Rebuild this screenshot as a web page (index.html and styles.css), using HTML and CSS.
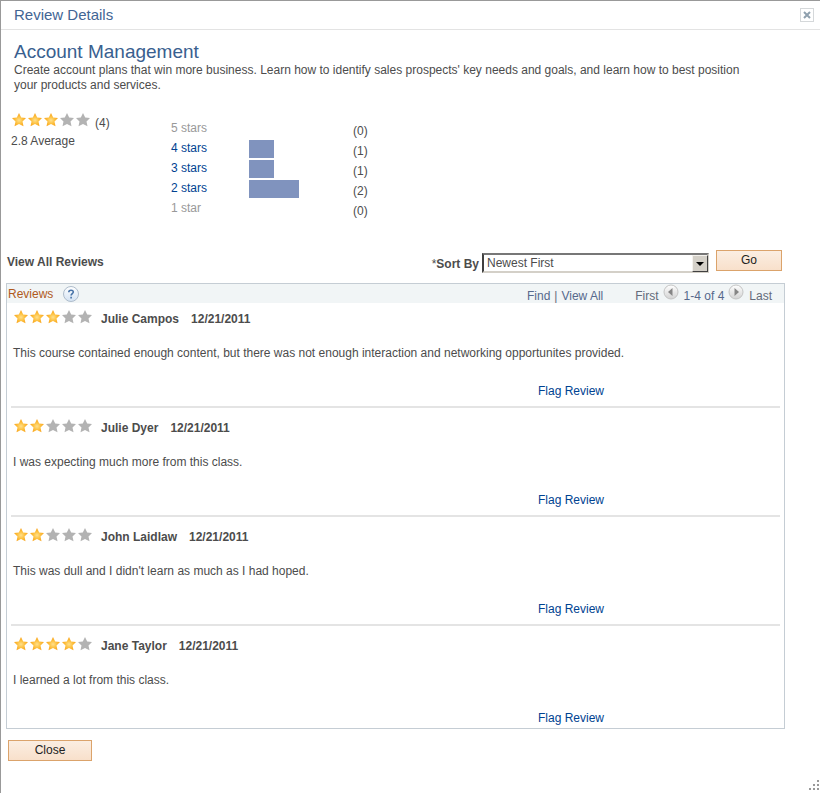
FILE: index.html
```html
<!DOCTYPE html>
<html lang="en">
<head>
<meta charset="utf-8">
<title>Review Details</title>
<link rel="stylesheet" href="styles.css">
</head>
<body>
<svg class="defs" aria-hidden="true">
  <defs>
    <radialGradient id="gold" cx="50%" cy="55%" r="50%">
      <stop offset="0" stop-color="#ffe08c"/>
      <stop offset="0.5" stop-color="#fdc244"/>
      <stop offset="1" stop-color="#f9a51c"/>
    </radialGradient>
    <linearGradient id="ball" x1="0" y1="0" x2="0" y2="1">
      <stop offset="0" stop-color="#ffffff"/>
      <stop offset="1" stop-color="#d2d2d2"/>
    </linearGradient>
    <linearGradient id="help" x1="0" y1="0" x2="0" y2="1">
      <stop offset="0" stop-color="#ffffff"/>
      <stop offset="1" stop-color="#d3e2f3"/>
    </linearGradient>
    <path id="star" d="M8 1 L10.2 5.4 L15 6 L11.5 9.4 L12.5 14.2 L8 12 L3.5 14.2 L4.5 9.4 L1 6 L5.8 5.4 Z"/>
    <g id="on"><use href="#star" fill="url(#gold)"/></g>
    <g id="off"><use href="#star" fill="#b3b3b3"/></g>
  </defs>
</svg>
<div class="dialog">
  <header class="titlebar">
    <span>Review Details</span>
    <button class="dismiss" type="button" aria-label="Close dialog"><svg width="8" height="8" viewBox="0 0 8 8"><path d="M1 1 L7 7 M7 1 L1 7" stroke="#8fa0ae" stroke-width="2"/></svg></button>
  </header>

  <section class="intro">
    <h1>Account Management</h1>
    <p>Create account plans that win more business. Learn how to identify sales prospects' key needs and goals, and learn how to best position your products and services.</p>
  </section>

  <section class="summary">
    <div class="score">
      <div class="rating">
        <svg class="stars" width="80" height="16" role="img" aria-label="3 of 5 stars"><use href="#on"/><use href="#on" x="16"/><use href="#on" x="32"/><use href="#off" x="48"/><use href="#off" x="64"/></svg>
        <span>(4)</span>
      </div>
      <div>2.8 Average</div>
    </div>
    <ul class="chart">
      <li><span class="level muted">5 stars</span><span class="bar"></span><span class="count">(0)</span></li>
      <li><a class="level" href="#">4 stars</a><span class="bar one"></span><span class="count">(1)</span></li>
      <li><a class="level" href="#">3 stars</a><span class="bar one"></span><span class="count">(1)</span></li>
      <li><a class="level" href="#">2 stars</a><span class="bar two"></span><span class="count">(2)</span></li>
      <li><span class="level muted">1 star</span><span class="bar"></span><span class="count">(0)</span></li>
    </ul>
  </section>

  <form class="sort">
    <strong class="view">View All Reviews</strong>
    <label for="sort">*<b>Sort By</b></label>
    <span class="picker">
      <select id="sort"><option>Newest First</option><option>Oldest First</option></select>
      <span class="arrow"></span>
    </span>
    <button class="action go" type="button">Go</button>
  </form>

  <section class="reviews">
    <div class="bar-head">
      <h2>Reviews</h2>
      <a class="help" href="#" aria-label="Help"><svg width="16" height="16" viewBox="0 0 16 16"><circle cx="8" cy="8" r="7.5" fill="url(#help)" stroke="#aebccb"/><path d="M5.8 6.2 C5.8 3.6 10.3 3.6 10.3 6.1 C10.3 7.6 8.1 7.7 8.1 9.5 M8.1 10.8 V12.4" fill="none" stroke="#4773a8" stroke-width="1.6"/></svg></a>
      <nav class="pager">
        <a href="#">Find</a><i>|</i><a href="#">View All</a>
        <span class="first">First</span>
        <button type="button" aria-label="Previous"><svg width="16" height="16" viewBox="0 0 16 16"><circle cx="8" cy="8" r="7" fill="url(#ball)" stroke="#c4c4c4"/><path d="M9.5 4 V12 L5 8 Z" fill="#858585"/></svg></button>
        <a href="#" class="range">1-4 of 4</a>
        <button type="button" aria-label="Next"><svg width="16" height="16" viewBox="0 0 16 16"><circle cx="8" cy="8" r="7" fill="url(#ball)" stroke="#c4c4c4"/><path d="M6.5 4 V12 L11 8 Z" fill="#858585"/></svg></button>
        <span>Last</span>
      </nav>
    </div>
    <ul class="list">
      <li>
        <div class="who"><svg class="stars" width="80" height="16" role="img" aria-label="3 of 5 stars"><use href="#on"/><use href="#on" x="16"/><use href="#on" x="32"/><use href="#off" x="48"/><use href="#off" x="64"/></svg><b>Julie Campos</b><b>12/21/2011</b></div>
        <p>This course contained enough content, but there was not enough interaction and networking opportunites provided.</p>
        <a class="flag" href="#">Flag Review</a>
      </li>
      <li>
        <div class="who"><svg class="stars" width="80" height="16" role="img" aria-label="2 of 5 stars"><use href="#on"/><use href="#on" x="16"/><use href="#off" x="32"/><use href="#off" x="48"/><use href="#off" x="64"/></svg><b>Julie Dyer</b><b>12/21/2011</b></div>
        <p>I was expecting much more from this class.</p>
        <a class="flag" href="#">Flag Review</a>
      </li>
      <li>
        <div class="who"><svg class="stars" width="80" height="16" role="img" aria-label="2 of 5 stars"><use href="#on"/><use href="#on" x="16"/><use href="#off" x="32"/><use href="#off" x="48"/><use href="#off" x="64"/></svg><b>John Laidlaw</b><b>12/21/2011</b></div>
        <p>This was dull and I didn't learn as much as I had hoped.</p>
        <a class="flag" href="#">Flag Review</a>
      </li>
      <li>
        <div class="who"><svg class="stars" width="80" height="16" role="img" aria-label="4 of 5 stars"><use href="#on"/><use href="#on" x="16"/><use href="#on" x="32"/><use href="#on" x="48"/><use href="#off" x="64"/></svg><b>Jane Taylor</b><b>12/21/2011</b></div>
        <p>I learned a lot from this class.</p>
        <a class="flag" href="#">Flag Review</a>
      </li>
    </ul>
  </section>

  <button class="action close" type="button">Close</button>
  <svg class="grip" width="10" height="10" aria-hidden="true"><path d="M8 0h2v2h-2z M4 4h2v2h-2z M8 4h2v2h-2z M0 8h2v2h-2z M4 8h2v2h-2z M8 8h2v2h-2z" fill="#999"/></svg>
</div>
</body>
</html>
```
FILE: styles.css
```css
* {
  box-sizing: border-box;
}

body {
  margin: 0;
  background: #fff;
  color: #4c4c4c;
  font: 12px/16px "Liberation Sans", Arial, sans-serif;
}

h1, h2, p, ul {
  margin: 0;
  padding: 0;
  font-weight: normal;
  list-style: none;
}

a {
  color: #004291;
  text-decoration: none;
}

svg {
  display: block;
}

button, select {
  margin: 0;
  font: inherit;
}

.defs {
  position: absolute;
  width: 0;
  height: 0;
}

.dialog {
  position: relative;
  min-height: 100vh;
  border: solid #999;
  border-width: 1px 0 0 1px;
}

.titlebar {
  display: flex;
  align-items: center;
  justify-content: space-between;
  height: 29px;
  padding: 0 6px 0 13px;
  border-bottom: 1px solid #e3e3e3;
  color: #426594;
  font-size: 15px;
}

.dismiss {
  display: flex;
  align-items: center;
  justify-content: center;
  width: 14px;
  height: 14px;
  padding: 0;
  border: 1px solid #d5d8da;
  background: #fff;
}

.intro {
  padding: 11px 70px 0 13px;
  line-height: 15px;
}

h1 {
  color: #39608f;
  font-size: 19px;
  line-height: 22px;
}

.summary {
  display: flex;
  padding: 19px 0 0 10px;
}

.score {
  width: 160px;
}

.rating {
  display: flex;
  align-items: flex-end;
  gap: 4px;
  height: 19px;
  margin-bottom: 2px;
}

.rating .stars {
  align-self: flex-start;
}

.chart {
  padding-top: 7px;
}

.chart li {
  display: grid;
  grid-template-columns: 78px 104px auto;
  height: 20px;
}

.level {
  padding-top: 1px;
}

.muted {
  color: #999;
}

.bar {
  height: 18px;
  margin-top: 1px;
  background: #8093be;
  width: 0;
}

.bar.one {
  width: 25px;
}

.bar.two {
  width: 50px;
}

.count {
  padding-top: 4px;
}

.sort {
  display: flex;
  align-items: center;
  margin: 31px 38px 10px 6px;
}

.view {
  flex: 1;
}

.picker {
  position: relative;
  width: 227px;
  margin: 3px 7px 0 3px;
}

.sort label {
  padding-top: 4px;
}

select {
  display: block;
  width: 100%;
  height: 20px;
  padding: 0 20px 0 3px;
  border: 2px solid;
  border-color: #777 #d4d0c8 #d4d0c8 #404040;
  border-radius: 0;
  background: #fff;
  color: #4c4c4c;
  appearance: none;
}

.arrow {
  position: absolute;
  top: 2px;
  right: 1px;
  display: flex;
  align-items: center;
  justify-content: center;
  width: 16px;
  height: 17px;
  border: 1px solid;
  border-color: #f4f2ee #404040 #404040 #f4f2ee;
  background: #d4d0c8;
  pointer-events: none;
}

.arrow::after {
  content: "";
  border: 4px solid transparent;
  border-top-color: #000;
  border-bottom: 0;
}

.action {
  height: 21px;
  padding: 0 0 2px;
  border: 1px solid #dba36b;
  background: linear-gradient(#fbeee2, #f8e0cb);
  color: #222;
  line-height: 16px;
}

.go {
  width: 66px;
  margin-bottom: 2px;
}

.close {
  display: block;
  width: 84px;
  margin: 11px 0 0 7px;
}

.reviews {
  margin: 0 35px 0 5px;
  border: 1px solid #c5cdd4;
}

.bar-head {
  display: flex;
  align-items: center;
  height: 19px;
  padding: 0 12px 0 1px;
  background: #f1f5f6;
}

h2 {
  color: #b05a1c;
  font-size: 12px;
}

.help {
  margin-left: 10px;
}

.pager {
  display: flex;
  align-items: center;
  margin-left: auto;
  padding-top: 4px;
  color: #636b7a;
}

.pager a {
  color: #56698c;
}

.pager i {
  margin: 0 4px;
  font-style: normal;
}

.pager button {
  margin: -8px 5px 0 4px;
  padding: 0;
  border: 0;
  background: none;
}

.first {
  margin-left: 32px;
}

.list {
  padding: 0 4px;
}

.list li {
  padding: 10px 2px 7px;
  border-bottom: 2px solid #e4e4e4;
}

.list li:first-child {
  padding-top: 6px;
}

.list li:last-child {
  padding-bottom: 2px;
  border-bottom: 0;
}

.who {
  display: flex;
  gap: 12px;
  height: 18px;
  margin-bottom: 18px;
}

.who .stars {
  margin-right: -4px;
}

.who b {
  padding-top: 2px;
}

.flag {
  display: block;
  width: fit-content;
  margin: 22px 174px 0 auto;
}

.grip {
  position: absolute;
  right: 1px;
  bottom: 3px;
}
```
